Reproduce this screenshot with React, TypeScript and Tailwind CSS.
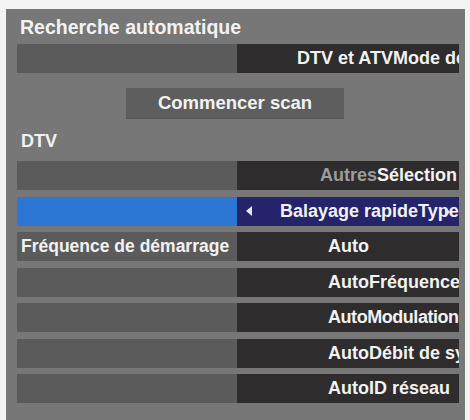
import React from "react";

const font = { fontFamily: '"Liberation Sans", Arial, sans-serif' };

function Row({
  left,
  right,
  blue,
}: {
  left?: React.ReactNode;
  right: React.ReactNode;
  blue?: boolean;
}) {
  return (
    <div className="flex h-[29px] w-full">
      <div
        className={`flex w-[220px] shrink-0 items-center pl-[4px] ${
          blue ? "bg-[#2c77d3]" : "bg-[#5b5b5b]"
        }`}
      >
        {left}
      </div>
      <div
        className={`relative flex min-w-0 flex-1 items-center overflow-hidden whitespace-nowrap ${
          blue ? "bg-[#25246b]" : "bg-[#2e2c2d]"
        }`}
      >
        {right}
      </div>
    </div>
  );
}

export default function App() {
  return (
    <div
      className="h-[420px] w-[470px] overflow-hidden bg-[#f3f3f3] pl-[6px] pt-[9px] font-bold text-[18px] text-[#f2f2f2]"
      style={font}
    >
      <div className="flex h-[411px] w-[459px] flex-col bg-[#777777] pl-[11px] pr-[6px] pt-[7px]">
        <div className="h-[22px] pl-[3px] text-[19.5px] leading-[22px]">
          Recherche automatique
        </div>
        <div className="mt-[6px]">
          <Row right={<span className="pl-[60px]">DTV et ATVMode de</span>} />
        </div>
        <div className="mt-[15px] flex h-[30px] w-[218px] items-center justify-center self-start bg-[#5e5e5e] ml-[109px] text-[18.5px] shadow-[0_1px_0_#555]">
          Commencer scan
        </div>
        <div className="mt-[12px] h-[22px] pl-[4px] leading-[22px]">DTV</div>
        <div className="mt-[9px] flex flex-col gap-[6.5px]">
          <Row
            right={
              <span className="pl-[83px]">
                <span className="text-[#9c9c9c]">Autres</span>Sélection d
              </span>
            }
          />
          <Row
            blue
            right={
              <>
                <svg
                  width="6"
                  height="10"
                  viewBox="0 0 6 10"
                  className="ml-[9px] shrink-0"
                >
                  <polygon points="6,0 6,10 0,5" fill="#e8e8f0" />
                </svg>
                <span className="pl-[28px]">Balayage rapideType</span>
                <svg
                  width="5"
                  height="10"
                  viewBox="0 0 5 10"
                  className="absolute left-[208px] top-[10px]"
                >
                  <polygon points="0,0 5,5 0,10" fill="#e8e8f0" />
                </svg>
              </>
            }
          />
          <Row
            left={<span className="text-[17.5px]">Fréquence de démarrage</span>}
            right={<span className="pl-[91px]">Auto</span>}
          />
          <Row right={<span className="pl-[91px]">AutoFréquence</span>} />
          <Row
            right={
              <span className="pl-[91px] tracking-[-0.45px]">AutoModulation</span>
            }
          />
          <Row right={<span className="pl-[91px]">AutoDébit de sy</span>} />
          <Row right={<span className="pl-[91px]">AutoID réseau</span>} />
        </div>
      </div>
    </div>
  );
}
